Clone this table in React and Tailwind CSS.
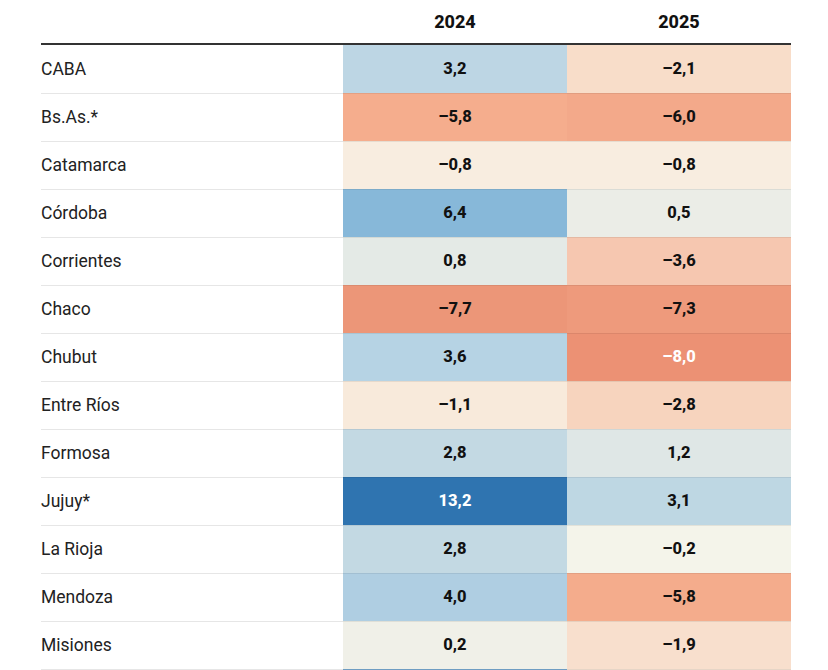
const ROWS = [
  { name: 'CABA', a: '3,2', ac: '#bdd6e4', b: '–2,1', bc: '#f8ddc9' },
  { name: 'Bs.As.*', a: '–5,8', ac: '#f5ad8d', b: '–6,0', bc: '#f3a98a' },
  { name: 'Catamarca', a: '–0,8', ac: '#f8ede0', b: '–0,8', bc: '#f8ede0' },
  { name: 'Córdoba', a: '6,4', ac: '#87b8d9', b: '0,5', bc: '#ebede7' },
  { name: 'Corrientes', a: '0,8', ac: '#e4eae6', b: '–3,6', bc: '#f6c7b0' },
  { name: 'Chaco', a: '–7,7', ac: '#ec9678', b: '–7,3', bc: '#ee9a7c' },
  { name: 'Chubut', a: '3,6', ac: '#b6d3e4', b: '–8,0', bc: '#ec9174', bw: true },
  { name: 'Entre Ríos', a: '–1,1', ac: '#f8eadb', b: '–2,8', bc: '#f7d4be' },
  { name: 'Formosa', a: '2,8', ac: '#c3d9e3', b: '1,2', bc: '#dfe7e6' },
  { name: 'Jujuy*', a: '13,2', ac: '#2f74b0', aw: true, b: '3,1', bc: '#bed7e3' },
  { name: 'La Rioja', a: '2,8', ac: '#c3d9e3', b: '–0,2', bc: '#f4f4ea' },
  { name: 'Mendoza', a: '4,0', ac: '#afcee2', b: '–5,8', bc: '#f4ac8c' },
  { name: 'Misiones', a: '0,2', ac: '#f0f0e8', b: '–1,9', bc: '#f8dfcd' },
  // next row only shows its top edge in the frame
  { name: '', a: '', ac: '#78a9d1', b: '', bc: '#f8e6d6' },
];

function Cell({ value, color, white, first }) {
  return (
    <div
      className={`flex items-center justify-center text-[16.5px] font-extrabold ${first ? '' : 'border-t border-black/[0.07]'} ${white ? 'text-white' : 'text-[#111]'}`}
      style={{ backgroundColor: color }}
    >
      {value}
    </div>
  );
}

export default function App() {
  return (
    <div className="min-h-screen bg-white font-['Roboto',sans-serif] text-[#222]">
      <div className="ml-[41px] w-[750px]">
        <div className="grid h-[45px] grid-cols-[302px_224px_224px] border-b-2 border-[#333]">
          <div />
          <div className="flex items-center justify-center text-[18px] font-extrabold text-[#111]">2024</div>
          <div className="flex items-center justify-center text-[18px] font-extrabold text-[#111]">2025</div>
        </div>
        {ROWS.map((r, i) => (
          <div key={i} className="grid h-12 grid-cols-[302px_224px_224px]">
            <div className={`flex items-center text-[17.5px] ${i ? 'border-t border-[#e6e6e6]' : ''}`}>{r.name}</div>
            <Cell value={r.a} color={r.ac} white={r.aw} first={!i} />
            <Cell value={r.b} color={r.bc} white={r.bw} first={!i} />
          </div>
        ))}
      </div>
    </div>
  );
}
